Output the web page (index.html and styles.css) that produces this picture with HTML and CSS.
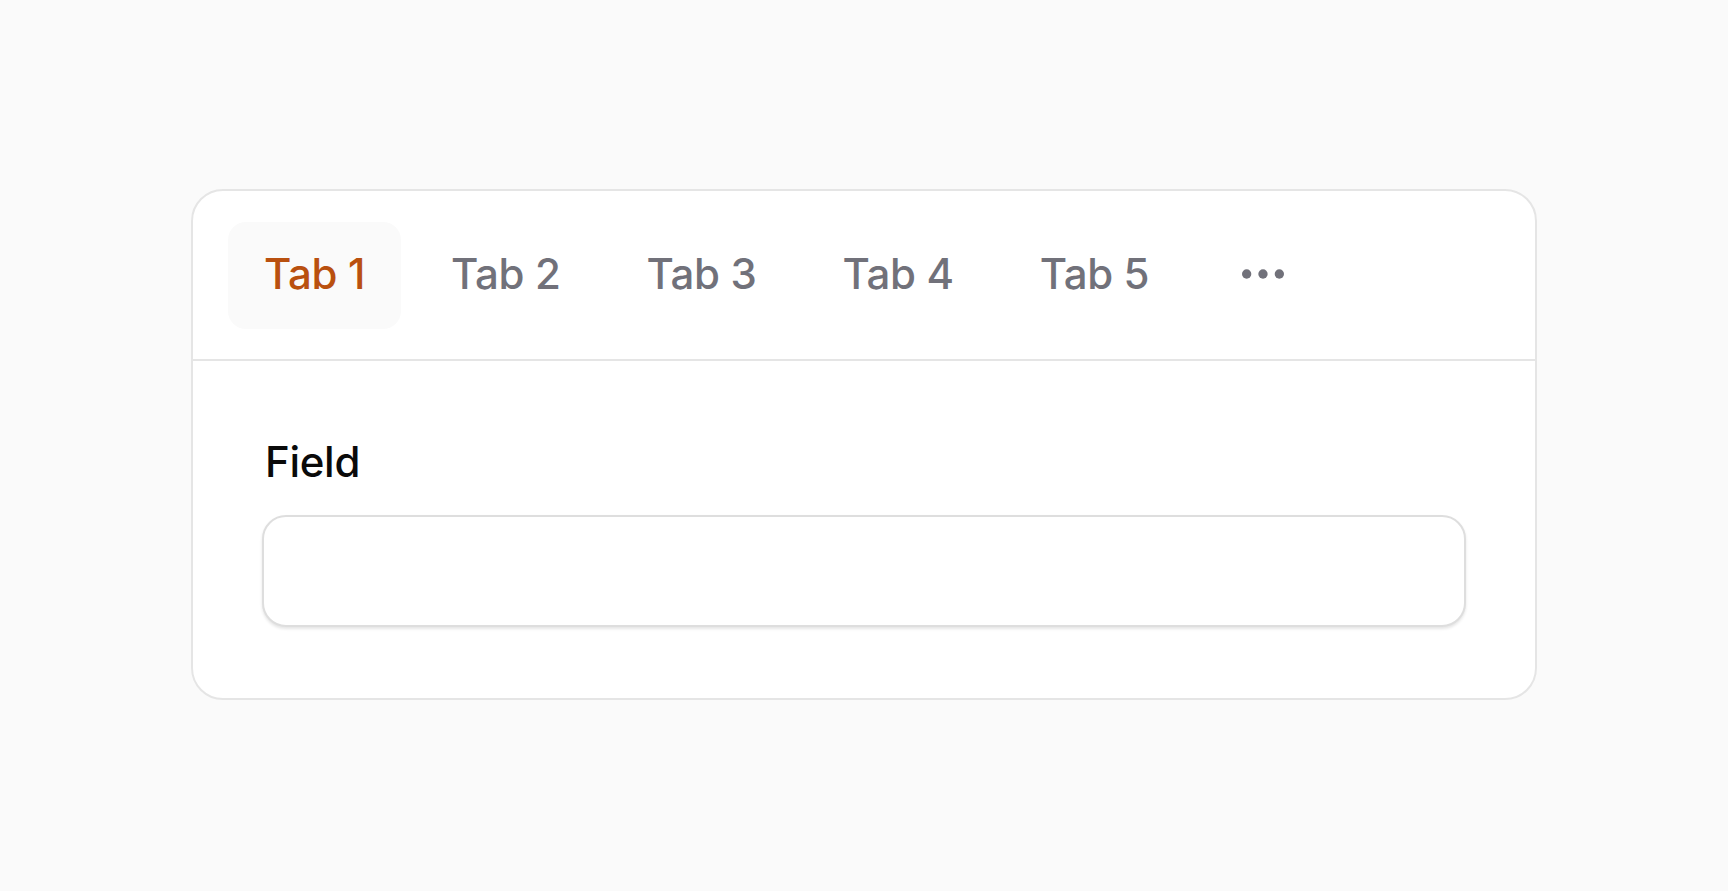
FILE: index.html
```html
<!DOCTYPE html>
<html lang="en">
<head>
<meta charset="utf-8">
<title>Tabs</title>
<link rel="stylesheet" href="styles.css">
</head>
<body>
<main class="page">
  <section class="card">
    <nav class="tabbar">
      <button class="tab tab-active">Tab 1</button>
      <button class="tab">Tab 2</button>
      <button class="tab">Tab 3</button>
      <button class="tab">Tab 4</button>
      <button class="tab">Tab 5</button>
      <button class="tab tab-more" aria-label="More">
        <svg class="dots" viewBox="0 0 24 24" width="56" height="56"><circle cx="5" cy="12" r="2"/><circle cx="12" cy="12" r="2"/><circle cx="19" cy="12" r="2"/></svg>
      </button>
    </nav>
    <div class="content">
      <label class="label" for="field">Field</label>
      <input class="input" id="field" type="text">
    </div>
  </section>
</main>
</body>
</html>
```
FILE: styles.css
```css
* { box-sizing: border-box; }
html, body { margin: 0; padding: 0; }
body {
  background: #fafafa;
  font-family: Inter, "Noto Sans", sans-serif;
  color: #0a0a0a;
}
.page {
  min-height: 100vh;
  display: flex;
  align-items: center;
  justify-content: center;
  padding-bottom: 3px;
}
.card {
  width: 1346px;
  background: #ffffff;
  border: 2px solid #e5e5e5;
  border-radius: 32px;
}
.tabbar {
  display: flex;
  align-items: center;
  gap: 14px;
  padding: 31px 35px 30px;
  border-bottom: 2px solid #e5e5e5;
}
.tab {
  height: 107px;
  display: flex;
  align-items: center;
  padding: 0 36px 3px;
  border: 0;
  border-radius: 18px;
  background: transparent;
  font-family: inherit;
  font-size: 42px;
  font-weight: 500;
  letter-spacing: -0.35px;
  color: #71717a;
}
.tab-active {
  background: #fafafa;
  color: #b9500f;
}
.tab-more { padding-left: 36px; }
.dots { fill: #71717a; display: block; }
.content {
  display: flex;
  flex-direction: column;
  gap: 20px;
  padding: 68px 69px 71px;
}
.label {
  font-size: 42px;
  font-weight: 500;
  letter-spacing: -0.3px;
  line-height: 66px;
  padding-left: 3px;
  color: #0a0a0a;
}
.input {
  height: 112px;
  width: 100%;
  border: 2px solid #dedede;
  border-radius: 24px;
  background: #fff;
  box-shadow: 0 2px 3px rgba(0, 0, 0, 0.1);
}
```
